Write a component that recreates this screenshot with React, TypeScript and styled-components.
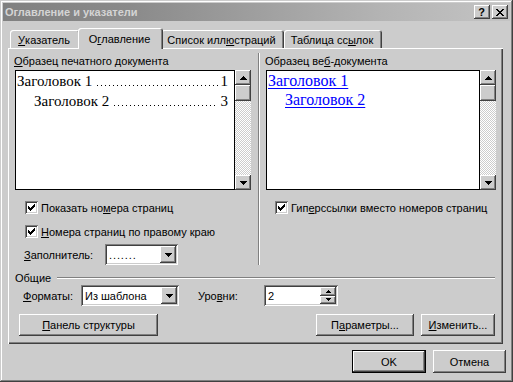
import React from "react";
import styled, { createGlobalStyle, css } from "styled-components";

const FACE = "#cccccc";

const Global = createGlobalStyle`
  html, body { margin: 0; padding: 0; background: ${FACE}; }
  body { font-family: "Liberation Sans", Arial, sans-serif; font-size: 11px; color: #000; }
  * { box-sizing: border-box; }
  u { text-decoration: underline; text-underline-offset: 1px; }
`;

const raised = css`
  box-shadow: inset -1px -1px #404040, inset 1px 1px #ffffff, inset -2px -2px #808080, inset 2px 2px ${FACE};
`;
const sunken = css`
  box-shadow: inset 1px 1px #808080, inset -1px -1px #ffffff, inset 2px 2px #404040, inset -2px -2px ${FACE};
`;

const Window = styled.div`
  width: 513px;
  height: 382px;
  background: ${FACE};
  padding: 3px;
  display: flex;
  flex-direction: column;
  box-shadow: inset -1px -1px #404040, inset 1px 1px ${FACE}, inset -2px -2px #808080, inset 2px 2px #ffffff;
`;

const TitleBar = styled.div`
  height: 18px;
  display: flex;
  align-items: center;
  padding: 0 2px 0 2px;
  background: linear-gradient(to right, #808080 0%, #8a8a8a 25%, #b4b4b4 75%, #c4c4c4 100%);
`;

const TitleText = styled.div`
  flex: 1;
  font-weight: bold;
  color: #d4d4d4;
  font-size: 11px;
  white-space: nowrap;
`;

const CaptionButton = styled.div`
  width: 16px;
  height: 14px;
  margin-left: 2px;
  background: ${FACE};
  ${raised};
  display: flex;
  align-items: center;
  justify-content: center;
  font-weight: bold;
  font-size: 11px;
  line-height: 14px;
  padding-right: 1px;
`;

const TabStrip = styled.div`
  margin-top: 7px;
  height: 20px;
  display: flex;
  align-items: flex-end;
  padding-left: 7px;
`;

const Tab = styled.div<{ $w: number; $active?: boolean }>`
  width: ${(p) => p.$w}px;
  height: ${(p) => (p.$active ? 21 : 18)}px;
  margin: ${(p) => (p.$active ? "0 -2px -1px -2px" : "0")};
  position: ${(p) => (p.$active ? "relative" : "static")};
  z-index: ${(p) => (p.$active ? 2 : 0)};
  background: ${FACE};
  border-radius: 3px 3px 0 0;
  box-shadow: inset 1px 1px #ffffff, inset -1px 0 #404040, inset -2px 0 #808080;
  display: flex;
  justify-content: center;
  padding-top: ${(p) => (p.$active ? 5 : 4)}px;
  white-space: nowrap;
  padding-right: 2px;
`;

const Panel = styled.div`
  margin: 0 7px 0 5px;
  background: ${FACE};
  box-shadow: inset 1px 1px #ffffff, inset -1px -1px #404040, inset -2px -2px #808080;
  padding: 6px 7px 8px 7px;
  display: flex;
  flex-direction: column;
`;

const TopArea = styled.div`
  display: grid;
  grid-template-columns: 236px 15px 230px;
`;

const Column = styled.div`
  display: flex;
  flex-direction: column;
`;

const Separator = styled.div`
  justify-self: center;
  width: 2px;
  margin-left: 1px;
  margin-top: -1px;
  border-left: 1px solid #808080;
  border-right: 1px solid #ffffff;
`;

const SectionLabel = styled.div`
  height: 14px;
  line-height: 14px;
  margin-left: -1px;
  white-space: nowrap;
`;

const Preview = styled.div`
  margin-top: 2px;
  height: 120px;
  display: flex;
`;

const PreviewPaper = styled.div<{ $serifSize: number }>`
  flex: 1;
  background: #ffffff;
  border: 1px solid #000000;
  font-family: "Liberation Serif", "Times New Roman", serif;
  font-size: ${(p) => p.$serifSize}px;
  padding: 0 6px 0 1px;
  overflow: hidden;
`;

const TocLine = styled.div<{ $indent: number }>`
  display: flex;
  align-items: flex-end;
  height: 20px;
  line-height: 20px;
  padding-left: ${(p) => p.$indent}px;
  white-space: nowrap;
`;

const Leader = styled.span`
  flex: 1;
  align-self: stretch;
  margin: 0 3px 0 5px;
  background-image: linear-gradient(to right, #000 1px, transparent 1px);
  background-size: 4px 1px;
  background-repeat: repeat-x;
  background-position: 0 14px;
`;

const WebLink = styled.div<{ $indent: number }>`
  height: 19px;
  line-height: 19px;
  padding-left: ${(p) => p.$indent}px;
  color: #0000ff;
  text-decoration: underline;
  text-underline-offset: 2px;
  white-space: nowrap;
`;

const ScrollBar = styled.div`
  width: 16px;
  display: flex;
  flex-direction: column;
  background: repeating-conic-gradient(#ffffff 0 25%, ${FACE} 0 50%) 0 0 / 2px 2px;
`;

const ScrollButton = styled.div`
  width: 16px;
  height: 15px;
  background: ${FACE};
  ${raised};
  display: flex;
  align-items: center;
  justify-content: center;
`;

const ScrollThumb = styled.div`
  width: 16px;
  height: 16px;
  background: ${FACE};
  ${raised};
`;

const ScrollTrack = styled.div`
  flex: 1;
`;

const CheckRow = styled.label<{ $top: number; $indent: number }>`
  display: flex;
  align-items: center;
  height: 13px;
  margin-top: ${(p) => p.$top}px;
  padding-left: ${(p) => p.$indent}px;
  white-space: nowrap;
`;

const CheckBox = styled.span`
  width: 13px;
  height: 13px;
  background: #ffffff;
  ${sunken};
  display: inline-flex;
  align-items: flex-start;
  justify-content: flex-start;
  padding: 3px;
  margin-right: 3px;
  flex: none;
`;

const FieldRow = styled.div<{ $top: number; $indent: number }>`
  display: flex;
  align-items: center;
  margin-top: ${(p) => p.$top}px;
  padding-left: ${(p) => p.$indent}px;
`;

const FieldLabel = styled.span<{ $w: number; $gap?: number }>`
  width: ${(p) => p.$w}px;
  margin-left: ${(p) => p.$gap ?? 0}px;
  white-space: nowrap;
`;

const Combo = styled.div<{ $w: number }>`
  width: ${(p) => p.$w}px;
  height: 21px;
  background: #ffffff;
  ${sunken};
  display: flex;
  align-items: center;
  padding: 2px;
`;

const ComboText = styled.span<{ $spacing?: number }>`
  flex: 1;
  padding-left: 2px;
  white-space: nowrap;
  overflow: hidden;
  letter-spacing: ${(p) => p.$spacing ?? 0}px;
`;

const DropButton = styled.div`
  width: 16px;
  height: 17px;
  background: ${FACE};
  ${raised};
  display: flex;
  align-items: center;
  justify-content: center;
`;

const SpinButtons = styled.div`
  width: 16px;
  height: 17px;
  display: flex;
  flex-direction: column;
`;

const SpinButton = styled.div`
  flex: 1;
  background: ${FACE};
  ${raised};
  display: flex;
  align-items: center;
  justify-content: center;
`;

const GroupHeader = styled.div`
  display: flex;
  align-items: center;
  height: 14px;
  margin-top: 6px;
`;

const GroupLine = styled.div`
  flex: 1;
  height: 2px;
  margin: 0 1px 0 6px;
  border-top: 1px solid #808080;
  border-bottom: 1px solid #ffffff;
`;

const ButtonRow = styled.div`
  display: flex;
  justify-content: space-between;
  margin-top: 8px;
  padding: 0 1px 0 4px;
`;

const ButtonGroup = styled.div`
  display: flex;
  gap: 7px;
`;

const Button = styled.button<{ $w: number; $h?: number; $default?: boolean }>`
  width: ${(p) => p.$w}px;
  height: ${(p) => p.$h ?? 22}px;
  border: none;
  padding: 0;
  background: ${FACE};
  font-family: "Liberation Sans", Arial, sans-serif;
  font-size: 11px;
  font-weight: normal;
  color: #000;
  white-space: nowrap;
  ${(p) =>
    p.$default
      ? css`
          box-shadow: inset 0 0 0 1px #000000, inset -2px -2px #404040, inset 2px 2px #ffffff,
            inset -3px -3px #808080;
        `
      : raised};
`;

const BottomRow = styled.div`
  display: flex;
  justify-content: flex-end;
  gap: 7px;
  margin-top: 6px;
  padding-right: 4px;
`;

const ArrowDown = ({ w = 7 }: { w?: number }) => (
  <svg width={w} height={(w + 1) / 2} viewBox={`0 0 ${w} ${(w + 1) / 2}`} shapeRendering="crispEdges">
    <polygon points={`0,0 ${w},0 ${w / 2},${(w + 1) / 2}`} fill="#000" />
  </svg>
);

const ArrowUp = ({ w = 7 }: { w?: number }) => (
  <svg width={w} height={(w + 1) / 2} viewBox={`0 0 ${w} ${(w + 1) / 2}`} shapeRendering="crispEdges">
    <polygon points={`${w / 2},0 ${w},${(w + 1) / 2} 0,${(w + 1) / 2}`} fill="#000" />
  </svg>
);

const CheckMark = () => (
  <svg width="7" height="7" viewBox="0 0 7 7" shapeRendering="crispEdges">
    <path
      d="M6 0h1v1h-1z M5 1h2v1h-2z M0 2h1v1h-1z M4 2h3v1h-3z M0 3h2v1h-2z M3 3h3v1h-3z M0 4h5v1h-5z M1 5h3v1h-3z M2 6h1v1h-1z"
      fill="#000"
    />
  </svg>
);

const CloseGlyph = () => (
  <svg width="8" height="7" viewBox="0 0 8 7" shapeRendering="crispEdges">
    <path
      d="M0 0h2v1h-2z M6 0h2v1h-2z M1 1h2v1h-2z M5 1h2v1h-2z M2 2h4v1h-4z M3 3h2v1h-2z M2 4h4v1h-4z M1 5h2v1h-2z M5 5h2v1h-2z M0 6h2v1h-2z M6 6h2v1h-2z"
      fill="#000"
    />
  </svg>
);

const Scroll = () => (
  <ScrollBar>
    <ScrollButton>
      <ArrowUp />
    </ScrollButton>
    <ScrollThumb />
    <ScrollTrack />
    <ScrollButton>
      <ArrowDown />
    </ScrollButton>
  </ScrollBar>
);

const Check = ({ children, top, indent }: { children: React.ReactNode; top: number; indent: number }) => (
  <CheckRow $top={top} $indent={indent}>
    <CheckBox>
      <CheckMark />
    </CheckBox>
    <span>{children}</span>
  </CheckRow>
);

const tabs = [
  { label: <><u>У</u>казатель</>, w: 70 },
  { label: <>О<u>г</u>лавление</>, w: 85, active: true },
  { label: <>Список илл<u>ю</u>страций</>, w: 123 },
  { label: <>Таблица сс<u>ы</u>лок</>, w: 98 },
];

const tocEntries = [
  { title: "Заголовок 1", page: "1", indent: 0 },
  { title: "Заголовок 2", page: "3", indent: 17 },
];

export default function App() {
  return (
    <>
      <Global />
      <Window>
        <TitleBar>
          <TitleText>Оглавление и указатели</TitleText>
          <CaptionButton>?</CaptionButton>
          <CaptionButton>
            <CloseGlyph />
          </CaptionButton>
        </TitleBar>

        <TabStrip>
          {tabs.map((t, i) => (
            <Tab key={i} $w={t.w} $active={t.active}>
              {t.label}
            </Tab>
          ))}
        </TabStrip>

        <Panel>
          <TopArea>
            <Column>
              <SectionLabel>
                <u>О</u>бразец печатного документа
              </SectionLabel>
              <Preview>
                <PreviewPaper $serifSize={15}>
                  {tocEntries.map((e) => (
                    <TocLine key={e.title} $indent={e.indent}>
                      <span>{e.title}</span>
                      <Leader />
                      <span>{e.page}</span>
                    </TocLine>
                  ))}
                </PreviewPaper>
                <Scroll />
              </Preview>
              <Check top={11} indent={10}>
                Показать но<u>м</u>ера страниц
              </Check>
              <Check top={11} indent={10}>
                <u>Н</u>омера страниц по правому краю
              </Check>
              <FieldRow $top={6} $indent={9}>
                <FieldLabel $w={81}>
                  <u>З</u>аполнитель:
                </FieldLabel>
                <Combo $w={73}>
                  <ComboText $spacing={0.9}>.......</ComboText>
                  <DropButton>
                    <ArrowDown />
                  </DropButton>
                </Combo>
              </FieldRow>
            </Column>

            <Separator />

            <Column>
              <SectionLabel>
                Образец ве<u>б</u>-документа
              </SectionLabel>
              <Preview>
                <PreviewPaper $serifSize={16}>
                  <WebLink $indent={0}>Заголовок 1</WebLink>
                  <WebLink $indent={17}>Заголовок 2</WebLink>
                </PreviewPaper>
                <Scroll />
              </Preview>
              <Check top={11} indent={9}>
                Гип<u>е</u>рссылки вместо номеров страниц
              </Check>
            </Column>
          </TopArea>

          <GroupHeader>
            <span>Общие</span>
            <GroupLine />
          </GroupHeader>

          <FieldRow $top={0} $indent={8}>
            <FieldLabel $w={58}>
              <u>Ф</u>орматы:
            </FieldLabel>
            <Combo $w={98}>
              <ComboText>Из шаблона</ComboText>
              <DropButton>
                <ArrowDown />
              </DropButton>
            </Combo>
            <FieldLabel $w={66} $gap={19}>
              Уро<u>в</u>ни:
            </FieldLabel>
            <Combo $w={74}>
              <ComboText>2</ComboText>
              <SpinButtons>
                <SpinButton>
                  <ArrowUp w={5} />
                </SpinButton>
                <SpinButton>
                  <ArrowDown w={5} />
                </SpinButton>
              </SpinButtons>
            </Combo>
          </FieldRow>

          <ButtonRow>
            <Button $w={139}>
              <u>П</u>анель структуры
            </Button>
            <ButtonGroup>
              <Button $w={98}>
                П<u>а</u>раметры...
              </Button>
              <Button $w={74}>
                <u>И</u>зменить...
              </Button>
            </ButtonGroup>
          </ButtonRow>
        </Panel>

        <BottomRow>
          <Button $w={74} $h={23} $default>
            OK
          </Button>
          <Button $w={73} $h={23}>
            Отмена
          </Button>
        </BottomRow>
      </Window>
    </>
  );
}
